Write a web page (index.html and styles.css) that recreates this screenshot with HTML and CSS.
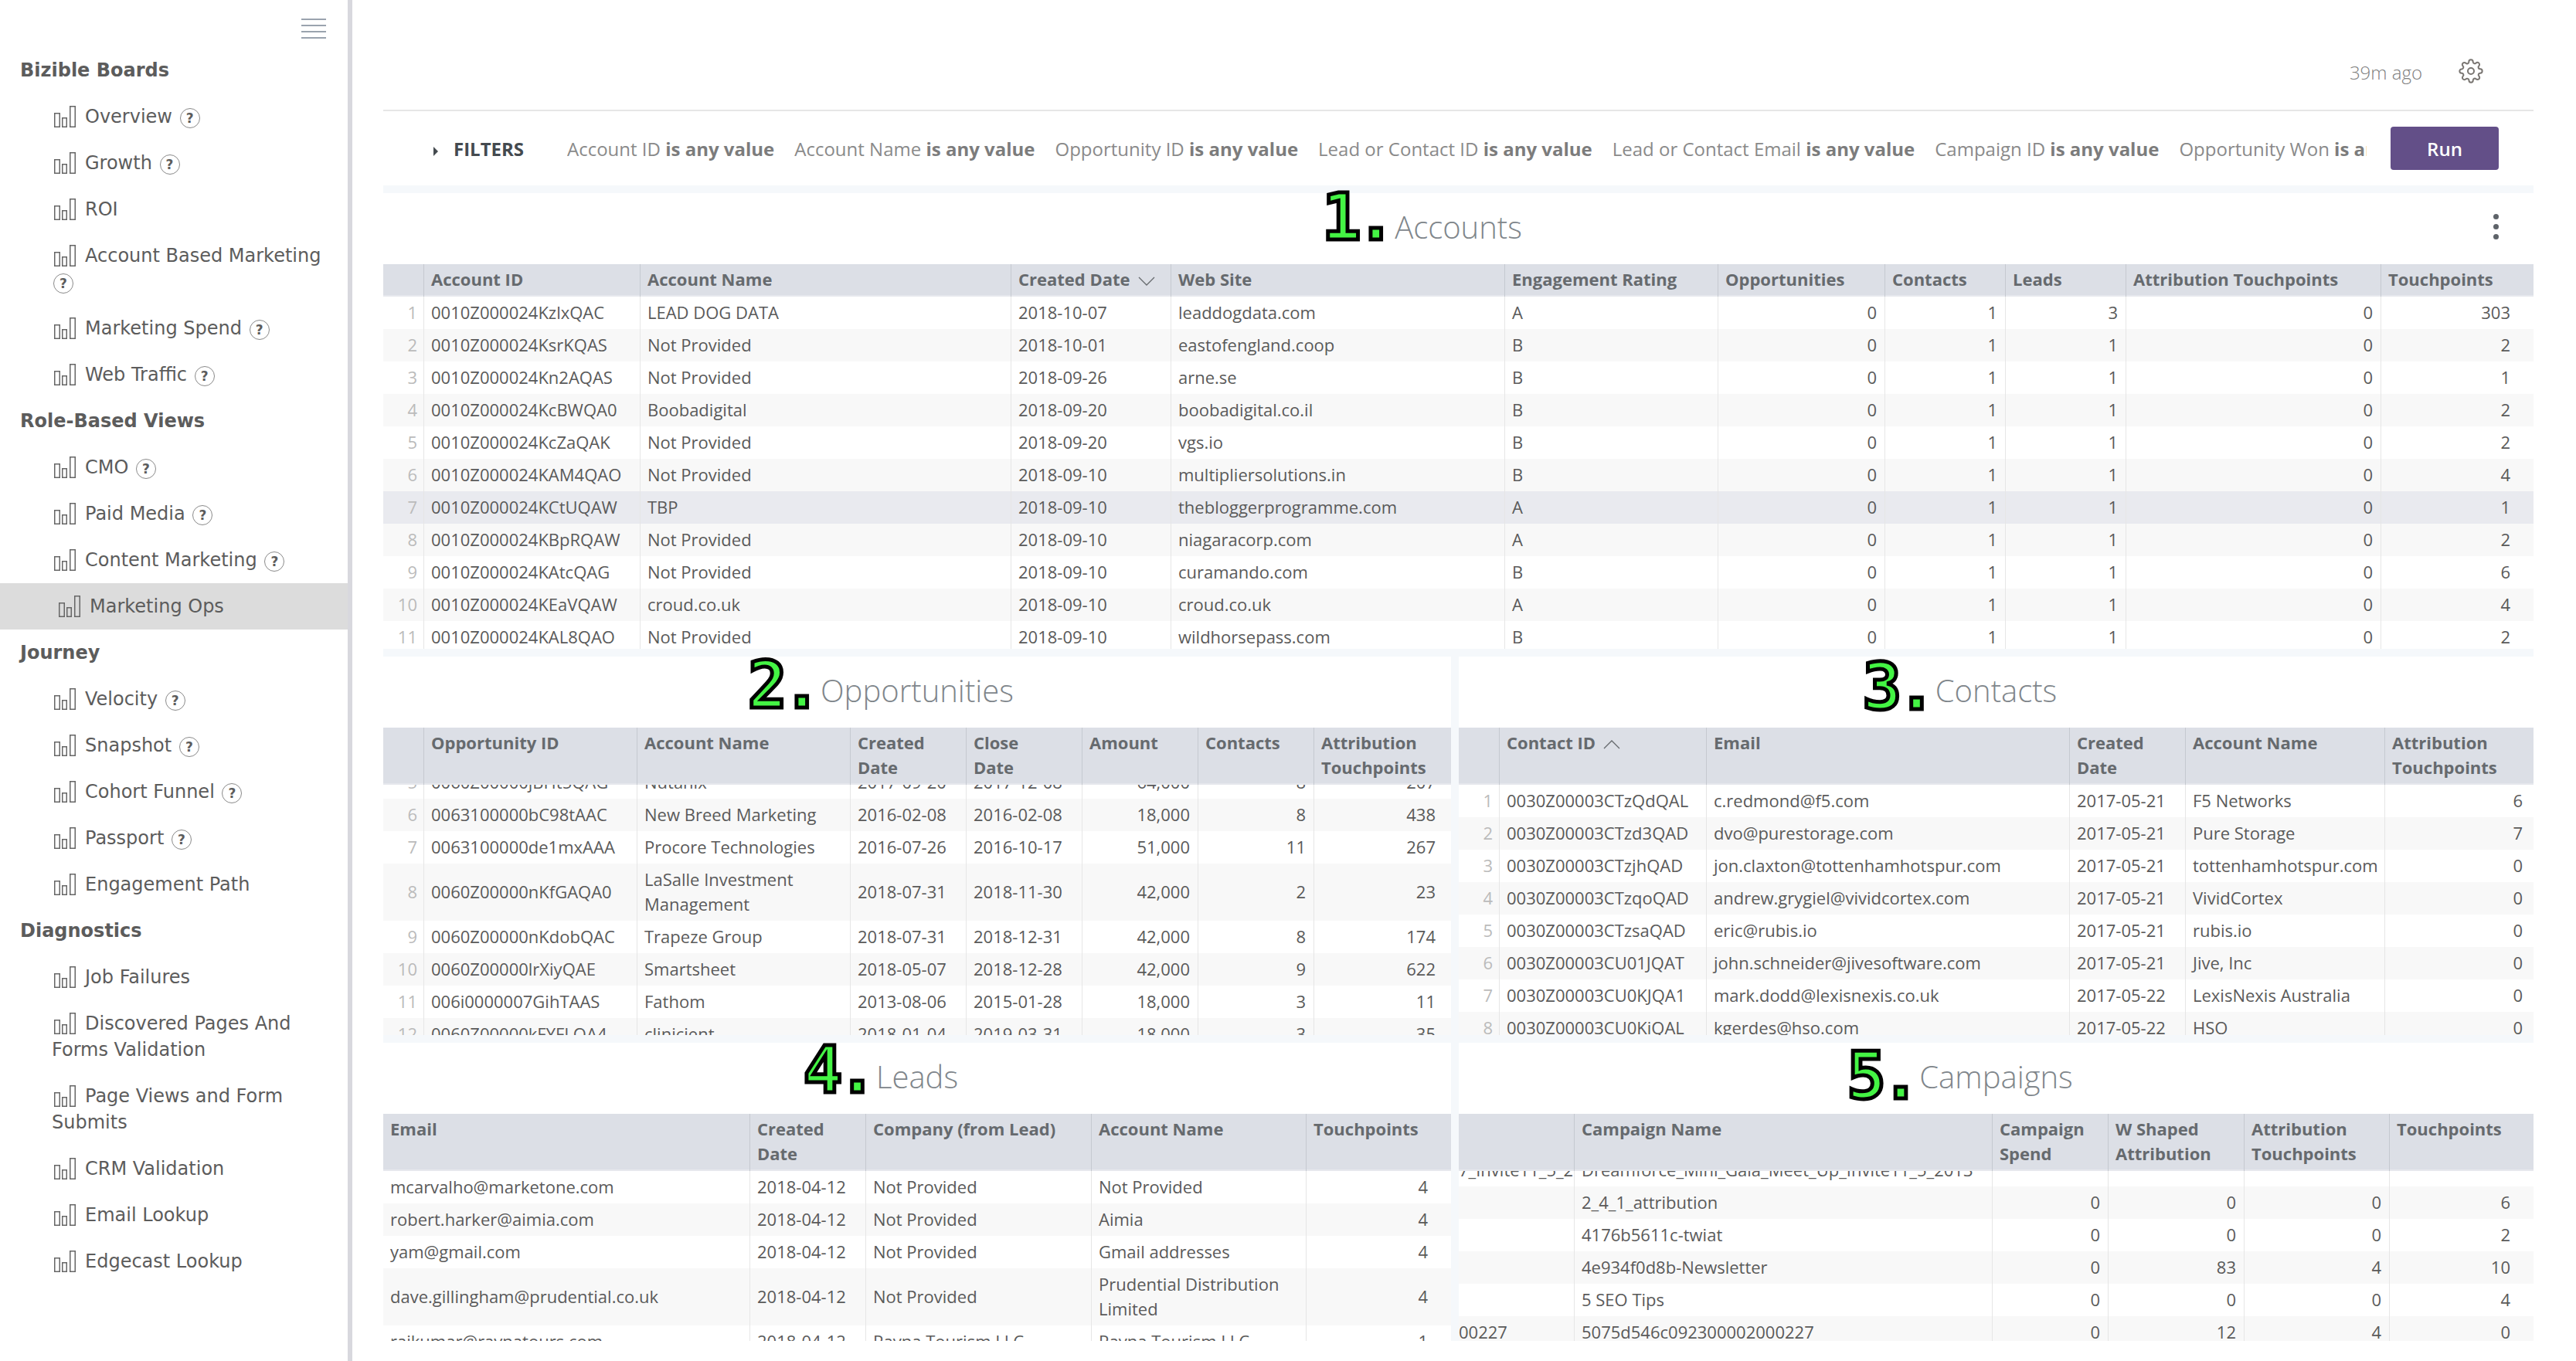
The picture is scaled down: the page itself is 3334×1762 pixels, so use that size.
FILE: index.html
```html
<!DOCTYPE html>
<html>
<head>
	<title>Marketing Ops</title>
	<link rel="stylesheet" href="styles.css">
</head>
<body>
	<svg class="defs">
		<symbol id="bars" viewBox="0 0 28 28">
			<rect x="0.75" y="9.75" width="6.5" height="17.5"></rect>
			<rect x="10.75" y="15.75" width="5.5" height="11.5"></rect>
			<rect x="20.75" y="0.75" width="6.5" height="26.5"></rect>
		</symbol>
	</svg>

	<div class="sidebar">
		<div class="menu-row">
			<div class="burger"><span></span><span></span><span></span><span></span></div>
		</div>
		<div class="group">Bizible Boards</div>
		<a class="item"><svg class="bars"><use href="#bars"></use></svg>Overview <span class="help">?</span></a>
		<a class="item"><svg class="bars"><use href="#bars"></use></svg>Growth <span class="help">?</span></a>
		<a class="item"><svg class="bars"><use href="#bars"></use></svg>ROI</a>
		<a class="item"><svg class="bars"><use href="#bars"></use></svg>Account Based Marketing <span class="help">?</span></a>
		<a class="item"><svg class="bars"><use href="#bars"></use></svg>Marketing Spend <span class="help">?</span></a>
		<a class="item"><svg class="bars"><use href="#bars"></use></svg>Web Traffic <span class="help">?</span></a>
		<div class="group">Role-Based Views</div>
		<a class="item"><svg class="bars"><use href="#bars"></use></svg>CMO <span class="help">?</span></a>
		<a class="item"><svg class="bars"><use href="#bars"></use></svg>Paid Media <span class="help">?</span></a>
		<a class="item"><svg class="bars"><use href="#bars"></use></svg>Content Marketing <span class="help">?</span></a>
		<a class="item active"><svg class="bars"><use href="#bars"></use></svg>Marketing Ops</a>
		<div class="group">Journey</div>
		<a class="item"><svg class="bars"><use href="#bars"></use></svg>Velocity <span class="help">?</span></a>
		<a class="item"><svg class="bars"><use href="#bars"></use></svg>Snapshot <span class="help">?</span></a>
		<a class="item"><svg class="bars"><use href="#bars"></use></svg>Cohort Funnel <span class="help">?</span></a>
		<a class="item"><svg class="bars"><use href="#bars"></use></svg>Passport <span class="help">?</span></a>
		<a class="item"><svg class="bars"><use href="#bars"></use></svg>Engagement Path</a>
		<div class="group">Diagnostics</div>
		<a class="item"><svg class="bars"><use href="#bars"></use></svg>Job Failures</a>
		<a class="item"><svg class="bars"><use href="#bars"></use></svg>Discovered Pages And Forms Validation</a>
		<a class="item"><svg class="bars"><use href="#bars"></use></svg>Page Views and Form Submits</a>
		<a class="item"><svg class="bars"><use href="#bars"></use></svg>CRM Validation</a>
		<a class="item"><svg class="bars"><use href="#bars"></use></svg>Email Lookup</a>
		<a class="item"><svg class="bars"><use href="#bars"></use></svg>Edgecast Lookup</a>
	</div>

	<div class="main">
		<div class="top-bar">
			<span class="updated">39m ago</span>
			<svg class="gear" viewBox="0 0 24 24"><circle cx="12" cy="12" r="3"></circle><path d="M19.4 15a1.65 1.65 0 0 0 .33 1.82l.06.06a2 2 0 0 1 0 2.83 2 2 0 0 1-2.83 0l-.06-.06a1.65 1.65 0 0 0-1.82-.33 1.65 1.65 0 0 0-1 1.51V21a2 2 0 0 1-2 2 2 2 0 0 1-2-2v-.09A1.65 1.65 0 0 0 9 19.4a1.65 1.65 0 0 0-1.82.33l-.06.06a2 2 0 0 1-2.83 0 2 2 0 0 1 0-2.83l.06-.06a1.65 1.65 0 0 0 .33-1.82 1.65 1.65 0 0 0-1.51-1H3a2 2 0 0 1-2-2 2 2 0 0 1 2-2h.09A1.65 1.65 0 0 0 4.6 9a1.65 1.65 0 0 0-.33-1.82l-.06-.06a2 2 0 0 1 0-2.83 2 2 0 0 1 2.83 0l.06.06a1.65 1.65 0 0 0 1.82.33H9a1.65 1.65 0 0 0 1-1.51V3a2 2 0 0 1 2-2 2 2 0 0 1 2 2v.09a1.65 1.65 0 0 0 1 1.51 1.65 1.65 0 0 0 1.82-.33l.06-.06a2 2 0 0 1 2.83 0 2 2 0 0 1 0 2.83l-.06.06a1.65 1.65 0 0 0-.33 1.82V9a1.65 1.65 0 0 0 1.51 1H21a2 2 0 0 1 2 2 2 2 0 0 1-2 2h-.09a1.65 1.65 0 0 0-1.51 1z"></path></svg>
		</div>

		<div class="filter-bar">
			<span class="filter-toggle"><i class="caret"></i>FILTERS</span>
			<div class="filter-list">
				<span>Account ID <b>is any value</b></span>
				<span>Account Name <b>is any value</b></span>
				<span>Opportunity ID <b>is any value</b></span>
				<span>Lead or Contact ID <b>is any value</b></span>
				<span>Lead or Contact Email <b>is any value</b></span>
				<span>Campaign ID <b>is any value</b></span>
				<span>Opportunity Won <b>is any value</b></span>
			</div>
			<button class="run-button">Run</button>
		</div>

		<div class="tiles">
			<div class="tile accounts">
				<div class="tile-title"><span class="title-text"><span class="mark mark-1">1.</span>Accounts</span><span class="dots"><i></i><i></i><i></i></span></div>
				<table class="head-table">
					<colgroup><col><col><col><col><col><col><col><col><col><col><col></colgroup>
					<tr><th></th><th>Account ID</th><th>Account Name</th><th>Created Date<svg class="sort" viewBox="0 0 22 12"><path d="M1 1l10 10L21 1"></path></svg></th><th>Web Site</th><th>Engagement Rating</th><th>Opportunities</th><th>Contacts</th><th>Leads</th><th>Attribution Touchpoints</th><th>Touchpoints</th></tr>
				</table>
				<div class="table-scroll">
					<table class="body-table">
						<colgroup><col><col><col><col><col><col><col><col><col><col><col></colgroup>
						<tr><td class="idx">1</td><td>0010Z000024KzlxQAC</td><td>LEAD DOG DATA</td><td>2018-10-07</td><td>leaddogdata.com</td><td>A</td><td class="num">0</td><td class="num">1</td><td class="num">3</td><td class="num">0</td><td class="num">303</td></tr>
						<tr><td class="idx">2</td><td>0010Z000024KsrKQAS</td><td>Not Provided</td><td>2018-10-01</td><td>eastofengland.coop</td><td>B</td><td class="num">0</td><td class="num">1</td><td class="num">1</td><td class="num">0</td><td class="num">2</td></tr>
						<tr><td class="idx">3</td><td>0010Z000024Kn2AQAS</td><td>Not Provided</td><td>2018-09-26</td><td>arne.se</td><td>B</td><td class="num">0</td><td class="num">1</td><td class="num">1</td><td class="num">0</td><td class="num">1</td></tr>
						<tr><td class="idx">4</td><td>0010Z000024KcBWQA0</td><td>Boobadigital</td><td>2018-09-20</td><td>boobadigital.co.il</td><td>B</td><td class="num">0</td><td class="num">1</td><td class="num">1</td><td class="num">0</td><td class="num">2</td></tr>
						<tr><td class="idx">5</td><td>0010Z000024KcZaQAK</td><td>Not Provided</td><td>2018-09-20</td><td>vgs.io</td><td>B</td><td class="num">0</td><td class="num">1</td><td class="num">1</td><td class="num">0</td><td class="num">2</td></tr>
						<tr><td class="idx">6</td><td>0010Z000024KAM4QAO</td><td>Not Provided</td><td>2018-09-10</td><td>multipliersolutions.in</td><td>B</td><td class="num">0</td><td class="num">1</td><td class="num">1</td><td class="num">0</td><td class="num">4</td></tr>
						<tr class="hover"><td class="idx">7</td><td>0010Z000024KCtUQAW</td><td>TBP</td><td>2018-09-10</td><td>thebloggerprogramme.com</td><td>A</td><td class="num">0</td><td class="num">1</td><td class="num">1</td><td class="num">0</td><td class="num">1</td></tr>
						<tr><td class="idx">8</td><td>0010Z000024KBpRQAW</td><td>Not Provided</td><td>2018-09-10</td><td>niagaracorp.com</td><td>A</td><td class="num">0</td><td class="num">1</td><td class="num">1</td><td class="num">0</td><td class="num">2</td></tr>
						<tr><td class="idx">9</td><td>0010Z000024KAtcQAG</td><td>Not Provided</td><td>2018-09-10</td><td>curamando.com</td><td>B</td><td class="num">0</td><td class="num">1</td><td class="num">1</td><td class="num">0</td><td class="num">6</td></tr>
						<tr><td class="idx">10</td><td>0010Z000024KEaVQAW</td><td>croud.co.uk</td><td>2018-09-10</td><td>croud.co.uk</td><td>A</td><td class="num">0</td><td class="num">1</td><td class="num">1</td><td class="num">0</td><td class="num">4</td></tr>
						<tr><td class="idx">11</td><td>0010Z000024KAL8QAO</td><td>Not Provided</td><td>2018-09-10</td><td>wildhorsepass.com</td><td>B</td><td class="num">0</td><td class="num">1</td><td class="num">1</td><td class="num">0</td><td class="num">2</td></tr>
					</table>
				</div>
			</div>

			<div class="tile opportunities">
				<div class="tile-title"><span class="title-text"><span class="mark mark-2">2.</span>Opportunities</span></div>
				<table class="head-table">
					<colgroup><col><col><col><col><col><col><col><col></colgroup>
					<tr><th></th><th>Opportunity ID</th><th>Account Name</th><th>Created Date</th><th>Close<br>Date</th><th>Amount</th><th>Contacts</th><th>Attribution Touchpoints</th></tr>
				</table>
				<div class="table-scroll">
					<table class="body-table">
						<colgroup><col><col><col><col><col><col><col><col></colgroup>
						<tr><td class="idx">5</td><td>0060Z00000jBHt5QAG</td><td>Nutanix</td><td>2017-09-20</td><td>2017-12-08</td><td class="num">64,000</td><td class="num">8</td><td class="num">207</td></tr>
						<tr><td class="idx">6</td><td>0063100000bC98tAAC</td><td>New Breed Marketing</td><td>2016-02-08</td><td>2016-02-08</td><td class="num">18,000</td><td class="num">8</td><td class="num">438</td></tr>
						<tr><td class="idx">7</td><td>0063100000de1mxAAA</td><td>Procore Technologies</td><td>2016-07-26</td><td>2016-10-17</td><td class="num">51,000</td><td class="num">11</td><td class="num">267</td></tr>
						<tr><td class="idx">8</td><td>0060Z00000nKfGAQA0</td><td>LaSalle Investment Management</td><td>2018-07-31</td><td>2018-11-30</td><td class="num">42,000</td><td class="num">2</td><td class="num">23</td></tr>
						<tr><td class="idx">9</td><td>0060Z00000nKdobQAC</td><td>Trapeze Group</td><td>2018-07-31</td><td>2018-12-31</td><td class="num">42,000</td><td class="num">8</td><td class="num">174</td></tr>
						<tr><td class="idx">10</td><td>0060Z00000lrXiyQAE</td><td>Smartsheet</td><td>2018-05-07</td><td>2018-12-28</td><td class="num">42,000</td><td class="num">9</td><td class="num">622</td></tr>
						<tr><td class="idx">11</td><td>006i0000007GihTAAS</td><td>Fathom</td><td>2013-08-06</td><td>2015-01-28</td><td class="num">18,000</td><td class="num">3</td><td class="num">11</td></tr>
						<tr><td class="idx">12</td><td>0060Z00000kFYFLQA4</td><td>clinicient</td><td>2018-01-04</td><td>2019-03-31</td><td class="num">18,000</td><td class="num">3</td><td class="num">35</td></tr>
					</table>
				</div>
			</div>

			<div class="tile contacts">
				<div class="tile-title"><span class="title-text"><span class="mark mark-3">3.</span>Contacts</span></div>
				<table class="head-table">
					<colgroup><col><col><col><col><col><col></colgroup>
					<tr><th></th><th>Contact ID<svg class="sort" viewBox="0 0 22 12"><path d="M1 11L11 1l10 10"></path></svg></th><th>Email</th><th>Created Date</th><th>Account Name</th><th>Attribution Touchpoints</th></tr>
				</table>
				<div class="table-scroll">
					<table class="body-table">
						<colgroup><col><col><col><col><col><col></colgroup>
						<tr><td class="idx">1</td><td>0030Z00003CTzQdQAL</td><td>c.redmond@f5.com</td><td>2017-05-21</td><td>F5 Networks</td><td class="num">6</td></tr>
						<tr><td class="idx">2</td><td>0030Z00003CTzd3QAD</td><td>dvo@purestorage.com</td><td>2017-05-21</td><td>Pure Storage</td><td class="num">7</td></tr>
						<tr><td class="idx">3</td><td>0030Z00003CTzjhQAD</td><td>jon.claxton@tottenhamhotspur.com</td><td>2017-05-21</td><td>tottenhamhotspur.com</td><td class="num">0</td></tr>
						<tr><td class="idx">4</td><td>0030Z00003CTzqoQAD</td><td>andrew.grygiel@vividcortex.com</td><td>2017-05-21</td><td>VividCortex</td><td class="num">0</td></tr>
						<tr><td class="idx">5</td><td>0030Z00003CTzsaQAD</td><td>eric@rubis.io</td><td>2017-05-21</td><td>rubis.io</td><td class="num">0</td></tr>
						<tr><td class="idx">6</td><td>0030Z00003CU01JQAT</td><td>john.schneider@jivesoftware.com</td><td>2017-05-21</td><td>Jive, Inc</td><td class="num">0</td></tr>
						<tr><td class="idx">7</td><td>0030Z00003CU0KJQA1</td><td>mark.dodd@lexisnexis.co.uk</td><td>2017-05-22</td><td>LexisNexis Australia</td><td class="num">0</td></tr>
						<tr><td class="idx">8</td><td>0030Z00003CU0KiQAL</td><td>kgerdes@hso.com</td><td>2017-05-22</td><td>HSO</td><td class="num">0</td></tr>
					</table>
				</div>
			</div>

			<div class="tile leads">
				<div class="tile-title"><span class="title-text"><span class="mark mark-4">4.</span>Leads</span></div>
				<table class="head-table">
					<colgroup><col><col><col><col><col></colgroup>
					<tr><th>Email</th><th>Created Date</th><th>Company (from Lead)</th><th>Account Name</th><th>Touchpoints</th></tr>
				</table>
				<div class="table-scroll">
					<table class="body-table">
						<colgroup><col><col><col><col><col></colgroup>
						<tr><td>mcarvalho@marketone.com</td><td>2018-04-12</td><td>Not Provided</td><td>Not Provided</td><td class="num">4</td></tr>
						<tr><td>robert.harker@aimia.com</td><td>2018-04-12</td><td>Not Provided</td><td>Aimia</td><td class="num">4</td></tr>
						<tr><td>yam@gmail.com</td><td>2018-04-12</td><td>Not Provided</td><td>Gmail addresses</td><td class="num">4</td></tr>
						<tr><td>dave.gillingham@prudential.co.uk</td><td>2018-04-12</td><td>Not Provided</td><td>Prudential Distribution Limited</td><td class="num">4</td></tr>
						<tr><td>rajkumar@raynatours.com</td><td>2018-04-12</td><td>Rayna Tourism LLC</td><td>Rayna Tourism LLC</td><td class="num">1</td></tr>
					</table>
				</div>
			</div>

			<div class="tile campaigns">
				<div class="tile-title"><span class="title-text"><span class="mark mark-5">5.</span>Campaigns</span></div>
				<table class="head-table">
					<colgroup><col><col><col><col><col><col></colgroup>
					<tr><th></th><th>Campaign Name</th><th>Campaign Spend</th><th>W Shaped Attribution</th><th>Attribution Touchpoints</th><th>Touchpoints</th></tr>
				</table>
				<div class="table-scroll">
					<table class="body-table">
						<colgroup><col><col><col><col><col><col></colgroup>
						<tr><td class="cut">7_Invite11_5_2</td><td>Dreamforce_Mini_Gala_Meet_Up_Invite11_5_2013</td><td></td><td></td><td></td><td></td></tr>
						<tr><td class="cut"></td><td>2_4_1_attribution</td><td class="num">0</td><td class="num">0</td><td class="num">0</td><td class="num">6</td></tr>
						<tr><td class="cut"></td><td>4176b5611c-twiat</td><td class="num">0</td><td class="num">0</td><td class="num">0</td><td class="num">2</td></tr>
						<tr><td class="cut"></td><td>4e934f0d8b-Newsletter</td><td class="num">0</td><td class="num">83</td><td class="num">4</td><td class="num">10</td></tr>
						<tr><td class="cut"></td><td>5 SEO Tips</td><td class="num">0</td><td class="num">0</td><td class="num">0</td><td class="num">4</td></tr>
						<tr><td class="cut">00227</td><td>5075d546c092300002000227</td><td class="num">0</td><td class="num">12</td><td class="num">4</td><td class="num">0</td></tr>
					</table>
				</div>
			</div>
		</div>
	</div>
</body>
</html>
```

FILE: styles.css
```css
* {
	box-sizing: border-box;
}

html, body {
	height: 100%;
}

body {
	margin: 0;
	display: flex;
	overflow: hidden;
	background-color: #ffffff;
	color: #5a5a5a;
	font-family: "Open Sans", "Liberation Sans", sans-serif;
	font-size: 22px;
}

.defs {
	display: none;
}

/* sidebar */
.sidebar {
	width: 456px;
	flex: none;
	border-right: 6px solid #d8d8de;
	font-family: "DejaVu Sans", sans-serif;
	font-size: 24px;
	line-height: 34px;
	color: #5c5c5c;
}

.menu-row {
	height: 61px;
	padding: 24px 28px 0 0;
	display: flex;
	justify-content: flex-end;
}

.burger {
	width: 32px;
	height: 26px;
	display: flex;
	flex-direction: column;
	justify-content: space-between;
}

.burger span {
	height: 2px;
	background-color: #9aa3ae;
}

.group {
	padding: 13px 0 13px 26px;
	font-weight: bold;
}

.item {
	display: block;
	padding: 13px 20px 13px 67px;
}

.item.active {
	padding-left: 73px;
	background-color: #dcdcdc;
}

.bars {
	width: 28px;
	height: 28px;
	margin: 0 12px 0 3px;
	vertical-align: -6px;
	fill: none;
	stroke: #666666;
	stroke-width: 1.5;
}

.help {
	display: inline-block;
	width: 26px;
	height: 26px;
	margin-left: 2px;
	overflow: hidden;
	border: 1px solid #8a8a8a;
	border-radius: 50%;
	font-size: 17px;
	font-weight: bold;
	line-height: 24px;
	text-align: center;
	vertical-align: -7px;
}

/* main */
.main {
	flex: 1;
	min-width: 0;
	padding: 0 55px 0 40px;
}

.top-bar {
	height: 144px;
	padding: 76px 65px 0 0;
	display: flex;
	justify-content: flex-end;
	align-items: flex-start;
	border-bottom: 2px solid #e6e6e6;
}

.updated {
	margin: 2px 47px 0 0;
	font-size: 24px;
	font-weight: 300;
	line-height: 32px;
	color: #808080;
}

.gear {
	width: 32px;
	height: 32px;
	fill: none;
	stroke: #7a7672;
	stroke-width: 1.5;
}

.filter-bar {
	height: 96px;
	padding: 20px 45px 20px 0;
	display: flex;
	align-items: center;
}

.filter-toggle {
	width: 238px;
	flex: none;
	padding-left: 65px;
	font-size: 24px;
	font-weight: bold;
	color: #444a4f;
}

.caret {
	display: inline-block;
	margin-right: 20px;
	border-left: 6px solid #444a4f;
	border-top: 6px solid transparent;
	border-bottom: 6px solid transparent;
}

.filter-list {
	flex: 1;
	min-width: 0;
	margin-right: 31px;
	display: flex;
	gap: 26px;
	overflow: hidden;
	white-space: nowrap;
	font-size: 24px;
	color: #8a8a8a;
}

.filter-list b {
	color: #7c7c7c;
}

.run-button {
	width: 140px;
	height: 56px;
	flex: none;
	border: none;
	border-radius: 4px;
	background-color: #634f88;
	color: #ffffff;
	font-family: inherit;
	font-size: 24px;
	font-weight: 600;
}

/* tiles */
.tiles {
	height: 1496px;
	padding-top: 10px;
	display: grid;
	grid-template-columns: 1382px 1391px;
	grid-template-rows: 590px 490px 386px;
	gap: 10px;
	background-color: #f5f8fb;
}

.tile {
	min-width: 0;
	min-height: 0;
	background-color: #ffffff;
	display: flex;
	flex-direction: column;
}

.accounts {
	grid-column: 1 / 3;
}

.tile-title {
	position: relative;
	height: 92px;
	padding-top: 14px;
	flex: none;
	text-align: center;
	font-size: 40px;
	font-weight: 300;
	line-height: 60px;
	color: #80868b;
}

.title-text {
	position: relative;
	display: inline-block;
}

.mark {
	position: absolute;
	right: calc(100% + 5px);
	top: -20px;
	font-family: "DejaVu Sans Mono", monospace;
	font-size: 84px;
	font-weight: bold;
	line-height: 84px;
	letter-spacing: -6px;
	color: #44f444;
	-webkit-text-stroke: 5px #000000;
}

.mark-1 { top: -25px; }
.mark-2 { top: -19px; }
.mark-3 { top: -17px; }
.mark-4 { top: -21px; }
.mark-5 { top: -13px; }

.dots {
	position: absolute;
	top: 27px;
	right: 45px;
	display: flex;
	flex-direction: column;
	gap: 6px;
}

.dots i {
	width: 7px;
	height: 7px;
	border-radius: 50%;
	background-color: #5e6369;
}

/* tables */
table {
	width: 100%;
	flex: none;
	table-layout: fixed;
	border-collapse: separate;
	border-spacing: 0;
}

th, td {
	padding: 4px 9px 6px;
	line-height: 32px;
	text-align: left;
	overflow: hidden;
}

th {
	padding-top: 3px;
	padding-bottom: 7px;
	vertical-align: top;
	font-weight: bold;
	color: #666a6e;
	background-color: #dcdfe6;
	border-right: 1px solid #c5c9d0;
	box-shadow: inset 0 -2px #e6e8ed;
}

td {
	vertical-align: middle;
	border-right: 1px solid #e6e6e6;
}

th:last-child, td:last-child {
	border-right: none;
}

.table-scroll {
	flex: 1;
	min-height: 0;
	overflow: hidden;
}

.body-table tr:nth-child(even) {
	background-color: #f8f8f8;
}

.body-table tr.hover {
	background-color: #e9eaef;
}

td.idx {
	padding-left: 0;
	padding-right: 8px;
	text-align: right;
	color: #bbbbbb;
}

td.num {
	padding-right: 10px;
	text-align: right;
}

.accounts td.num:last-child,
.leads td.num:last-child,
.campaigns td.num:last-child {
	padding-right: 30px;
}

.opportunities td.num:last-child {
	padding-right: 20px;
}

.contacts td.num:last-child {
	padding-right: 14px;
}

td.cut {
	padding-left: 0;
	padding-right: 0;
	white-space: nowrap;
}

.sort {
	width: 22px;
	height: 12px;
	margin-left: 10px;
	fill: none;
	stroke: #666a6e;
	stroke-width: 1.3;
}

.accounts col:nth-child(1) { width: 53px; }
.accounts col:nth-child(2) { width: 280px; }
.accounts col:nth-child(3) { width: 480px; }
.accounts col:nth-child(4) { width: 207px; }
.accounts col:nth-child(5) { width: 432px; }
.accounts col:nth-child(6) { width: 276px; }
.accounts col:nth-child(7) { width: 216px; }
.accounts col:nth-child(8) { width: 156px; }
.accounts col:nth-child(9) { width: 156px; }
.accounts col:nth-child(10) { width: 330px; }
.accounts col:nth-child(11) { width: 197px; }

.opportunities col:nth-child(1) { width: 53px; }
.opportunities col:nth-child(2) { width: 276px; }
.opportunities col:nth-child(3) { width: 276px; }
.opportunities col:nth-child(4) { width: 150px; }
.opportunities col:nth-child(5) { width: 150px; }
.opportunities col:nth-child(6) { width: 150px; }
.opportunities col:nth-child(7) { width: 150px; }
.opportunities col:nth-child(8) { width: 177px; }

.contacts col:nth-child(1) { width: 53px; }
.contacts col:nth-child(2) { width: 268px; }
.contacts col:nth-child(3) { width: 470px; }
.contacts col:nth-child(4) { width: 150px; }
.contacts col:nth-child(5) { width: 258px; }
.contacts col:nth-child(6) { width: 192px; }

.leads col:nth-child(1) { width: 475px; }
.leads col:nth-child(2) { width: 150px; }
.leads col:nth-child(3) { width: 292px; }
.leads col:nth-child(4) { width: 278px; }
.leads col:nth-child(5) { width: 187px; }

.campaigns col:nth-child(1) { width: 150px; }
.campaigns col:nth-child(2) { width: 541px; }
.campaigns col:nth-child(3) { width: 150px; }
.campaigns col:nth-child(4) { width: 176px; }
.campaigns col:nth-child(5) { width: 188px; }
.campaigns col:nth-child(6) { width: 186px; }

/* rows scrolled under the fixed header */
.opportunities .body-table {
	margin-top: -24px;
}

.campaigns .body-table {
	margin-top: -22px;
}
```
